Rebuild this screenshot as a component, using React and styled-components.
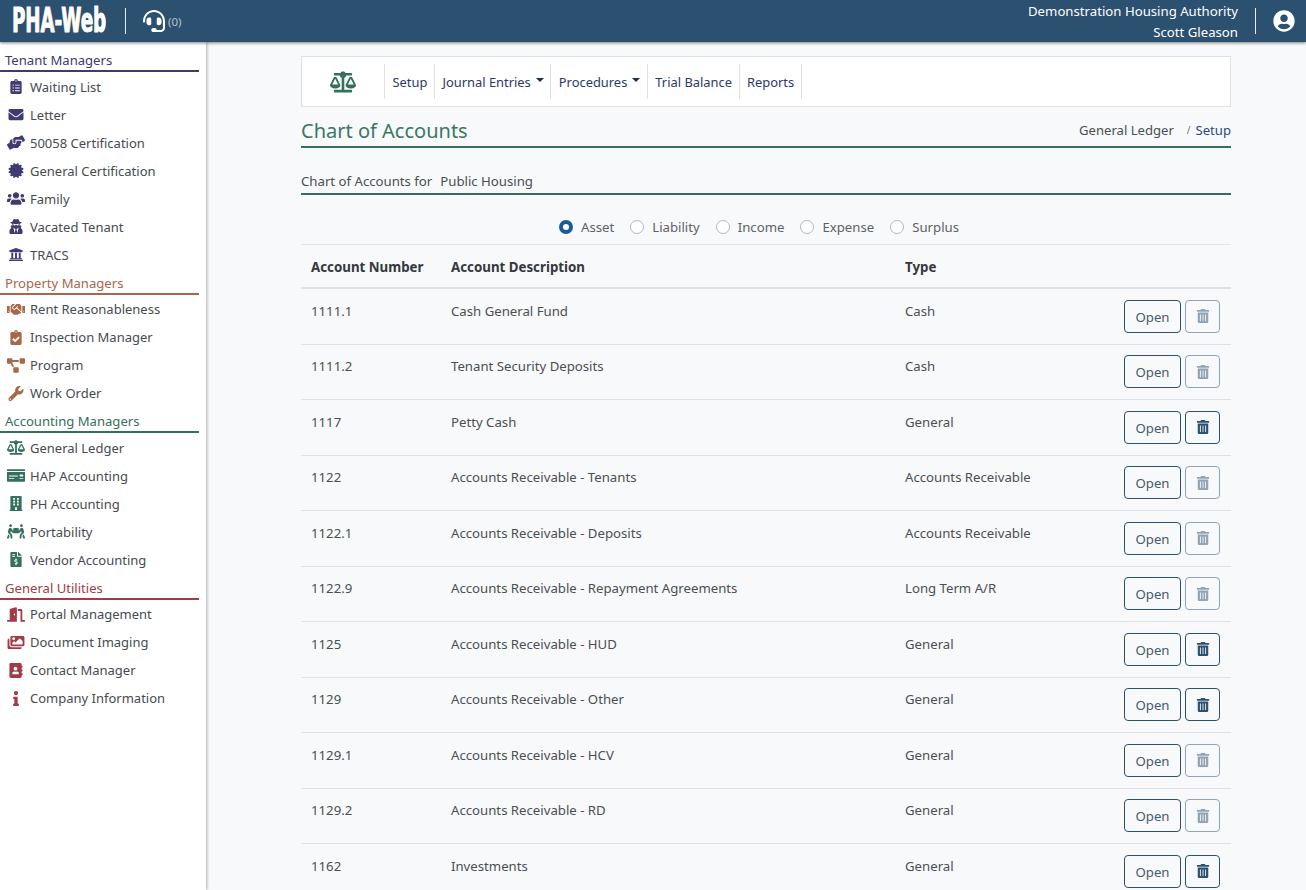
import React from "react";
import styled, { createGlobalStyle } from "styled-components";
import {
  FaAddressBook,
  FaBalanceScale,
  FaBuilding,
  FaCertificate,
  FaClipboardCheck,
  FaClipboardList,
  FaDoorOpen,
  FaEnvelope,
  FaFileInvoiceDollar,
  FaHandshake,
  FaHandsHelping,
  FaHeadset,
  FaImages,
  FaInfo,
  FaMoneyCheck,
  FaPeopleCarry,
  FaProjectDiagram,
  FaTrashAlt,
  FaUniversity,
  FaUserCircle,
  FaUsers,
  FaUserSecret,
  FaWrench,
} from "react-icons/fa";

const menuGroups = [
  {
    title: "Tenant Managers",
    color: "#3f3a70",
    items: [
      ["Waiting List", FaClipboardList],
      ["Letter", FaEnvelope],
      ["50058 Certification", FaHandsHelping],
      ["General Certification", FaCertificate],
      ["Family", FaUsers],
      ["Vacated Tenant", FaUserSecret],
      ["TRACS", FaUniversity],
    ],
  },
  {
    title: "Property Managers",
    color: "#a9674a",
    items: [
      ["Rent Reasonableness", FaHandshake],
      ["Inspection Manager", FaClipboardCheck],
      ["Program", FaProjectDiagram],
      ["Work Order", FaWrench],
    ],
  },
  {
    title: "Accounting Managers",
    color: "#34705c",
    items: [
      ["General Ledger", FaBalanceScale],
      ["HAP Accounting", FaMoneyCheck],
      ["PH Accounting", FaBuilding],
      ["Portability", FaPeopleCarry],
      ["Vendor Accounting", FaFileInvoiceDollar],
    ],
  },
  {
    title: "General Utilities",
    color: "#a23b45",
    items: [
      ["Portal Management", FaDoorOpen],
      ["Document Imaging", FaImages],
      ["Contact Manager", FaAddressBook],
      ["Company Information", FaInfo],
    ],
  },
];

const accounts = [
  ["1111.1", "Cash General Fund", "Cash", false],
  ["1111.2", "Tenant Security Deposits", "Cash", false],
  ["1117", "Petty Cash", "General", true],
  ["1122", "Accounts Receivable - Tenants", "Accounts Receivable", false],
  ["1122.1", "Accounts Receivable - Deposits", "Accounts Receivable", false],
  ["1122.9", "Accounts Receivable - Repayment Agreements", "Long Term A/R", false],
  ["1125", "Accounts Receivable - HUD", "General", true],
  ["1129", "Accounts Receivable - Other", "General", true],
  ["1129.1", "Accounts Receivable - HCV", "General", false],
  ["1129.2", "Accounts Receivable - RD", "General", false],
  ["1162", "Investments", "General", true],
];

const accountTypes = ["Asset", "Liability", "Income", "Expense", "Surplus"];

// colour fringe of each logo letter
const logoLetters = [
  ["P", "#7fd88f"],
  ["H", "#8a7fd0"],
  ["A", "#d8485a"],
  ["-", "#dfe8ef"],
  ["W", "#e6d94a"],
  ["e", "#bfe8e0"],
  ["b", "#7fd8e8"],
];

const GlobalStyle = createGlobalStyle`
  html, body {
    margin: 0;
    height: 100%;
    overflow: hidden;
  }
  body {
    background: #f8f9fa;
    font-family: "Noto Sans", "Open Sans", sans-serif;
    font-size: 13.2px;
    color: #4a4f55;
  }
`;

const Page = styled.div`
  height: 890px;
  display: flex;
  flex-direction: column;
  overflow: hidden;
`;

const Header = styled.header`
  flex: 0 0 42px;
  min-height: 0;
  position: relative;
  z-index: 2;
  display: flex;
  align-items: center;
  justify-content: space-between;
  background: #2c5070;
  box-shadow: 0 1px 3px rgba(0, 0, 0, 0.5);
  color: #fff;
`;

const HeaderLeft = styled.div`
  display: flex;
  align-items: center;
  padding-left: 12px;
`;

const Logo = styled.div`
  width: 97px;
  height: 42px;
  line-height: 42px;
  white-space: nowrap;
`;

const LogoText = styled.span`
  display: inline-block;
  font-family: "DejaVu Sans", sans-serif;
  font-size: 33px;
  font-weight: 700;
  -webkit-text-stroke: 0.9px #fff;
  transform: scaleX(0.55);
  transform-origin: left center;
`;

const LogoLetter = styled.span`
  color: #fff;
  text-shadow: 1px 0 0 ${({ $fringe }) => $fringe};
`;

const HeaderDivider = styled.span`
  width: 1px;
  height: 26px;
  background: #e8eef3;
  margin: ${({ $margin }) => $margin};
`;

const Support = styled.div`
  display: flex;
  align-items: center;
  gap: 3px;
  font-size: 11.5px;
  color: #b4c1cc;
  svg {
    font-size: 22px;
    color: #fff;
  }
`;

const HeaderRight = styled.div`
  display: flex;
  align-items: center;
  padding-right: 11px;
  svg {
    font-size: 22px;
  }
`;

const UserBlock = styled.div`
  padding-top: 2px;
  text-align: right;
  font-size: 13.2px;
  line-height: 21px;
`;

const Body = styled.div`
  flex: 1;
  display: flex;
  min-height: 0;
`;

const Sidebar = styled.nav`
  flex: 0 0 206px;
  background: #fff;
  box-shadow: 1px 0 3px rgba(0, 0, 0, 0.3);
  padding-top: 10px;
`;

const GroupTitle = styled.div`
  width: 199px;
  box-sizing: border-box;
  padding-left: 5px;
  height: 20px;
  line-height: 17px;
  font-size: 13.1px;
  color: ${({ $color }) => $color};
  border-bottom: 2px solid ${({ $color }) => $color};
`;

const MenuList = styled.div`
  display: flex;
  flex-direction: column;
  padding: 0.5px 0 6px;
`;

const MenuItem = styled.a`
  height: 28px;
  display: flex;
  align-items: center;
  font-size: 13px;
  color: #464b51;
  svg {
    flex: 0 0 18px;
    margin: 0 5px 0 7px;
    font-size: 15px;
    color: ${({ $color }) => $color};
  }
`;

const Main = styled.main`
  flex: 1;
  min-width: 0;
  padding: 14px 75px 0 95px;
`;

const SubNav = styled.div`
  height: 49px;
  display: flex;
  align-items: center;
  background: #fff;
  border: 1px solid #dfe1e4;
`;

const SubNavIcon = styled.div`
  flex: 0 0 82px;
  display: flex;
  justify-content: center;
  font-size: 26px;
  color: #34705c;
`;

const SubNavLink = styled.a`
  height: 35px;
  display: flex;
  align-items: center;
  gap: 5px;
  padding: 0 6.5px 0 7.5px;
  font-size: 12.9px;
  color: #2b3a67;
  border-left: 1px solid #dfe1e4;
  &:last-child {
    border-right: 1px solid #dfe1e4;
  }
`;

const Caret = styled.span`
  width: 0;
  height: 0;
  margin-bottom: 3px;
  border-left: 4px solid transparent;
  border-right: 4px solid transparent;
  border-top: 4px solid #1f2d5c;
`;

const TitleRow = styled.div`
  height: 32px;
  padding-top: 7px;
  display: flex;
  align-items: center;
  justify-content: space-between;
  border-bottom: 2px solid #34705c;
`;

const PageTitle = styled.h1`
  margin: 0;
  font-size: 20px;
  font-weight: 400;
  color: #3b7763;
`;

const Breadcrumb = styled.div`
  display: flex;
  align-items: center;
  font-size: 13.1px;
  color: #4a4f55;
  i {
    margin: 0 5px 0 13px;
    font-style: normal;
    font-size: 10px;
    color: #6c757d;
  }
  a {
    color: #2b4a7a;
  }
`;

const ForRow = styled.div`
  height: 47px;
  box-sizing: border-box;
  margin-bottom: 19px;
  padding-top: 20px;
  display: flex;
  align-items: center;
  gap: 8px;
  border-bottom: 2px solid #34705c;
`;

const TypeFilter = styled.div`
  display: flex;
  justify-content: center;
  gap: 16px;
  height: 30px;
  padding-right: 14px;
`;

const RadioLabel = styled.label`
  display: flex;
  align-items: center;
  gap: 8px;
  height: 26px;
  color: #5c6268;
`;

const RadioDot = styled.span`
  width: 14px;
  height: 14px;
  box-sizing: border-box;
  border-radius: 50%;
  background: #fff;
  border: ${({ $checked }) => ($checked ? "4px solid #1a5a96" : "1px solid #b5b9bd")};
`;

const Table = styled.div`
  display: flex;
  flex-direction: column;
  border-top: 1px solid #e3e5e8;
`;

const Row = styled.div`
  display: grid;
  grid-template-columns: 140px 454px 1fr auto;
  align-items: center;
  box-sizing: border-box;
  padding: 0 11px 0 10px;
  height: 55.5px;
  border-bottom: 1px solid #dee2e6;
`;

const HeadRow = styled(Row)`
  height: 44px;
  padding-top: 2px;
  font-size: 13.3px;
  font-weight: 700;
  color: #33383d;
  border-bottom: 2px solid #dee2e6;
`;

const Cell = styled.div`
  padding-bottom: 11px;
`;

const Actions = styled.div`
  display: flex;
  gap: 4px;
`;

const OpenButton = styled.button`
  width: 57px;
  height: 33px;
  padding: 1px 0 0;
  font: inherit;
  color: #47596c;
  background: transparent;
  border: 1px solid #2c5070;
  border-radius: 4px;
`;

const TrashButton = styled.button`
  width: 35px;
  height: 33px;
  padding: 0;
  display: flex;
  align-items: center;
  justify-content: center;
  background: transparent;
  border: 1px solid #2c5070;
  border-radius: 4px;
  color: #2c5070;
  font-size: 14px;
  opacity: ${({ disabled }) => (disabled ? 0.5 : 1)};
`;

const App = () => {
  return (
    <Page>
      <GlobalStyle />
      <Header>
        <HeaderLeft>
          <Logo>
            <LogoText>
              {logoLetters.map(([letter, fringe]) => (
                <LogoLetter key={letter} $fringe={fringe}>
                  {letter}
                </LogoLetter>
              ))}
            </LogoText>
          </Logo>
          <HeaderDivider $margin="0 17px 0 16px" />
          <Support>
            <FaHeadset />
            (0)
          </Support>
        </HeaderLeft>
        <HeaderRight>
          <UserBlock>
            Demonstration Housing Authority
            <br />
            Scott Gleason
          </UserBlock>
          <HeaderDivider $margin="0 17px 0 17px" />
          <FaUserCircle />
        </HeaderRight>
      </Header>
      <Body>
        <Sidebar>
          {menuGroups.map((group) => (
            <div key={group.title}>
              <GroupTitle $color={group.color}>{group.title}</GroupTitle>
              <MenuList>
                {group.items.map(([label, Icon]) => (
                  <MenuItem key={label} $color={group.color}>
                    <Icon />
                    {label}
                  </MenuItem>
                ))}
              </MenuList>
            </div>
          ))}
        </Sidebar>
        <Main>
          <SubNav>
            <SubNavIcon>
              <FaBalanceScale />
            </SubNavIcon>
            <SubNavLink>Setup</SubNavLink>
            <SubNavLink>
              Journal Entries
              <Caret />
            </SubNavLink>
            <SubNavLink>
              Procedures
              <Caret />
            </SubNavLink>
            <SubNavLink>Trial Balance</SubNavLink>
            <SubNavLink>Reports</SubNavLink>
          </SubNav>
          <TitleRow>
            <PageTitle>Chart of Accounts</PageTitle>
            <Breadcrumb>
              General Ledger
              <i>/</i>
              <a>Setup</a>
            </Breadcrumb>
          </TitleRow>
          <ForRow>
            <span>Chart of Accounts for</span>
            <span>Public Housing</span>
          </ForRow>
          <TypeFilter>
            {accountTypes.map((type, index) => (
              <RadioLabel key={type}>
                <RadioDot $checked={index === 0} />
                {type}
              </RadioLabel>
            ))}
          </TypeFilter>
          <Table>
            <HeadRow>
              <div>Account Number</div>
              <div>Account Description</div>
              <div>Type</div>
              <div />
            </HeadRow>
            {accounts.map(([number, description, type, canDelete]) => (
              <Row key={number}>
                <Cell>{number}</Cell>
                <Cell>{description}</Cell>
                <Cell>{type}</Cell>
                <Actions>
                  <OpenButton>Open</OpenButton>
                  <TrashButton disabled={!canDelete}>
                    <FaTrashAlt />
                  </TrashButton>
                </Actions>
              </Row>
            ))}
          </Table>
        </Main>
      </Body>
    </Page>
  );
};

export default App;
